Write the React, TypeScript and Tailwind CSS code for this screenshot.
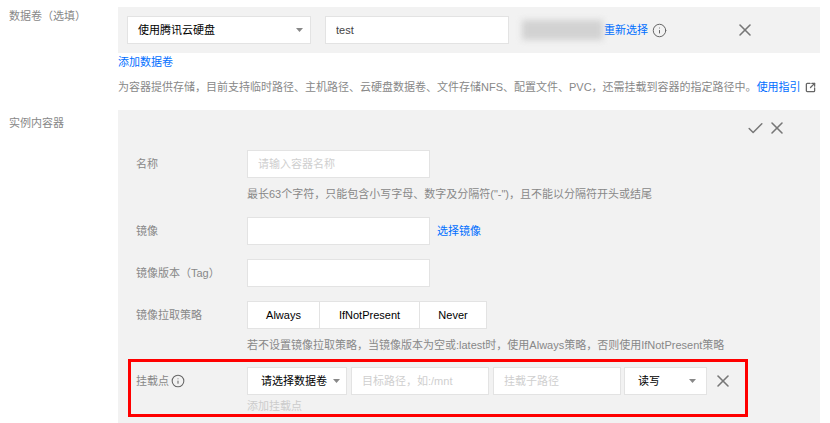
import * as React from 'react'
import {Check, Info, SquareArrowOutUpRight, X} from 'lucide-react'

function Caret({className}: {className: string}) {
	return (
		<svg width="7" height="4" viewBox="0 0 7 4" className={className}>
			<path d="M0 0h7L3.5 4z" fill="#888888"/>
		</svg>
	)
}

function TextInput({placeholder, defaultValue, width}: {placeholder?: string, defaultValue?: string, width: string}) {
	return (
		<input
			readOnly
			placeholder={placeholder}
			defaultValue={defaultValue}
			className={`${width} h-7 shrink-0 border border-[#e3e3e3] bg-white px-[10px] text-[11px] text-[#444] outline-none placeholder:text-[#cfcfcf]`}
		/>
	)
}

function Field({label, children}: {label: React.ReactNode, children: React.ReactNode}) {
	return (
		<div className="flex items-start">
			<div className="flex h-7 w-[111px] shrink-0 items-center text-[11px] text-[#888]">{label}</div>
			<div className="min-w-0">{children}</div>
		</div>
	)
}

export default function App() {
	return (
		<div className="h-[423px] w-[830px] overflow-hidden bg-white pt-[7px] text-[11px] font-['Liberation_Sans','Noto_Sans_CJK_SC',sans-serif]">
			<div className="flex">
				<div className="w-[118px] shrink-0 pl-[9px] pt-[1px] leading-4 text-[#888]">数据卷（选填）</div>
				<div className="w-[702px]">
					<div className="flex h-[46px] items-center bg-[#f2f2f2] pl-[9px]">
						<div className="flex h-7 w-[184px] items-center justify-between border border-[#e3e3e3] bg-white pl-[10px] pr-[7px] text-black">
							<span>使用腾讯云硬盘</span>
							<Caret className=""/>
						</div>
						<div className="ml-[14px]">
							<TextInput defaultValue="test" width="w-[184px]"/>
						</div>
						<div className="ml-[13px] h-5 w-[81px] bg-[#d2d2d2] blur-[3px]"></div>
						<a className="ml-[1px] text-[#006eff]">重新选择</a>
						<Info size={15} strokeWidth={1.6} className="ml-[4px] text-[#666]"/>
						<X size={20} strokeWidth={1.9} className="ml-[68px] text-[#777]"/>
					</div>

					<a className="mt-[1px] block h-[16px] leading-4 text-[#006eff]">添加数据卷</a>
					<p className="mt-[9px] flex h-4 items-center leading-4 whitespace-nowrap text-[#888]">
						为容器提供存储，目前支持临时路径、主机路径、云硬盘数据卷、文件存储NFS、配置文件、PVC，还需挂载到容器的指定路径中。
						<a className="text-[#006eff]">使用指引</a>
						<SquareArrowOutUpRight size={11} strokeWidth={2.8} className="ml-[4px] text-[#666]"/>
					</p>
				</div>
			</div>

			<div className="mt-[15px] flex">
				<div className="w-[118px] shrink-0 pl-[9px] pt-[5px] leading-4 text-[#888]">实例内容器</div>
				<div className="h-[313px] w-[702px] bg-[#f2f2f2] pl-[10px]">
					<div className="flex h-[40px] items-center justify-end gap-[2px] pb-[4px] pr-[33px] text-[#777]">
						<Check size={19} strokeWidth={1.9}/>
						<X size={20} strokeWidth={1.9}/>
					</div>

					<div className="pl-[8px]">
						<Field label="名称">
							<TextInput placeholder="请输入容器名称" width="w-[183px]"/>
							<p className="mt-2 leading-4 whitespace-nowrap text-[#888]">最长63个字符，只能包含小写字母、数字及分隔符("-")，且不能以分隔符开头或结尾</p>
						</Field>

						<div className="mt-[15px]">
							<Field label="镜像">
								<div className="flex items-center">
									<TextInput width="w-[183px]"/>
									<a className="ml-[7px] text-[#006eff]">选择镜像</a>
								</div>
							</Field>
						</div>

						<div className="mt-[14px]">
							<Field label="镜像版本（Tag）">
								<TextInput width="w-[183px]"/>
							</Field>
						</div>

						<div className="mt-[14px]">
							<Field label="镜像拉取策略">
								<div className="flex h-7 w-[240px] border border-[#e3e3e3] bg-white text-black">
									<div className="flex w-[72px] items-center justify-center border-r border-[#e3e3e3]">Always</div>
									<div className="flex w-[100px] items-center justify-center border-r border-[#e3e3e3]">IfNotPresent</div>
									<div className="flex flex-1 items-center justify-center">Never</div>
								</div>
								<p className="mt-2 leading-4 whitespace-nowrap text-[#888]">若不设置镜像拉取策略，当镜像版本为空或:latest时，使用Always策略，否则使用IfNotPresent策略</p>
							</Field>
						</div>
					</div>

					<div className="mt-[6px] h-[58px] w-[620px] border-[3px] border-[#ff0000] pl-[5px] pt-[5px]">
						<Field label={<span className="flex items-center">挂载点<Info size={14} strokeWidth={1.8} className="ml-[2px] text-[#666]"/></span>}>
							<div className="flex items-center">
								<div className="flex h-7 w-[100px] items-center border border-[#e3e3e3] bg-white pl-[13px] text-black">
									<span className="whitespace-nowrap">请选择数据卷</span>
									<Caret className="ml-[6px]"/>
								</div>
								<div className="ml-[4px]">
									<TextInput placeholder="目标路径，如:/mnt" width="w-[138px]"/>
								</div>
								<div className="ml-[4px]">
									<TextInput placeholder="挂载子路径" width="w-[128px]"/>
								</div>
								<div className="ml-[3px] flex h-7 w-[83px] items-center justify-between border border-[#e3e3e3] bg-white pl-[13px] pr-[10px] text-black">
									<span>读写</span>
									<Caret className=""/>
								</div>
								<X size={20} strokeWidth={1.9} className="ml-[6px] text-[#777]"/>
							</div>
							<a className="mt-[3px] block leading-4 text-[#ccc]">添加挂载点</a>
						</Field>
					</div>
				</div>
			</div>
		</div>
	)
}
